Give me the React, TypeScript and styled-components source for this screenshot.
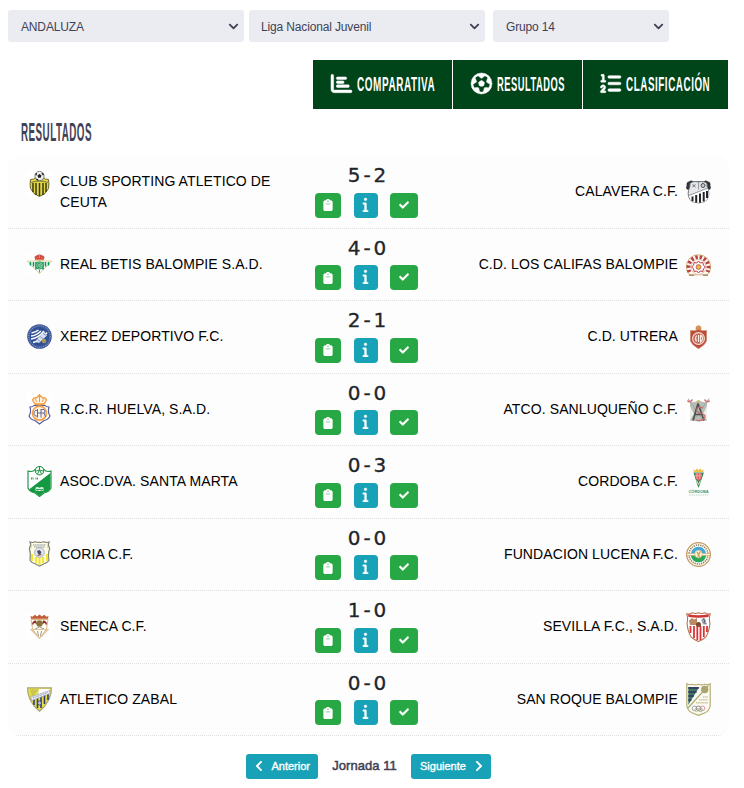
import React from "react";
import styled, { createGlobalStyle } from "styled-components";
import {
  FaChartBar,
  FaClipboard,
  FaInfo,
  FaListOl,
  FaRegFutbol,
} from "react-icons/fa6";
import {
  FaCheck,
  FaChevronDown,
  FaChevronLeft,
  FaChevronRight,
} from "react-icons/fa";

const COLORS = {
  ink: "#3f4254",
  field: "#ebecf2",
  nav: "#00441a",
  green: "#28a745",
  teal: "#17a2b8",
  line: "#e0e0e0",
};

const CeutaCrest = () => (
  <svg width="25" height="26" viewBox="0 0 25 26">
    <rect width="25" height="26" fill="#fff" />
    <path d="M3.500 8.500q4 0 5-2h8q1 2 5 2q.8 4 0 9q-2.500 6-9 8q-6.500-2-9-8q-.8-5 0-9z" fill="#e3d84a" stroke="#6b672c" strokeWidth="1" />
    <path d="M6 12v9M9 12v12M12.500 12v13M16 12v12M19 12v9" stroke="#3a3815" strokeWidth="1.500" />
    <path d="M4 11.500q8.500-3 17 0" fill="none" stroke="#8b8539" strokeWidth="1.300" />
    <circle cx="12.500" cy="5" r="4.600" fill="#f2f2f2" stroke="#555" strokeWidth=".7" />
    <path d="M12.500 3l2 1.500-.8 2.300h-2.500l-.8-2.300zM8 4l1.200-2 1 .6-.8 2zM15 1.500l2 2-1 1-1.500-1.800zM9.500 7.500l2 1-.6 1-2-1z" fill="#222" />
  </svg>
);

const BetisCrest = () => (
  <svg width="25" height="20" viewBox="0 0 25 20">
    <rect width="25" height="20" fill="#fff" />
    <path d="M.3 7h24.400l-5 5.500-7.200 7-7.200-7z" fill="#fff" stroke="#c9b777" strokeWidth=".7" />
    <path d="M3.500 8v3.500M6.500 8v4.500M9 8v7.500M16 8v7.500M18.500 8v4.500M21.500 8v3.500" stroke="#0b9b55" strokeWidth="1.600" />
    <circle cx="12.500" cy="11.500" r="3.700" fill="#8bcaa0" stroke="#0b9b55" strokeWidth=".8" />
    <path d="M11 9.500h2q2 1 0 2q2 1 0 2h-2zM12.500 16v2.500" fill="none" stroke="#3d8d64" strokeWidth=".9" />
    <path d="M8.500 5.800l-.7-3q2-1.800 4.700-2.100q2.700.3 4.700 2.100l-.7 3z" fill="#d74545" stroke="#a94436" strokeWidth=".5" />
    <path d="M8.500 5.800h8M12.500 0v4M9.500 3l1 1M15.500 3l-1 1" stroke="#e1aa45" strokeWidth=".8" />
  </svg>
);

const XerezCrest = () => (
  <svg width="25" height="25" viewBox="0 0 25 25">
    <circle cx="12.500" cy="12.500" r="12.300" fill="#3b5797" />
    <circle cx="12.500" cy="12.500" r="10.700" fill="none" stroke="#8799c3" strokeWidth="1.200" strokeDasharray="1 1" />
    <circle cx="12.500" cy="12.500" r="9.300" fill="#305096" />
    <path d="M4.500 9q4-.7 7-3M4 12q5-.3 10-5M4 15q7-.6 13-8M6 18.500q8-1.500 14-10" fill="none" stroke="#fff" strokeWidth="1.500" />
    <path d="M8 17.500L17 7.500l3 4-8 7.500z" fill="#dae1f0" />
    <path d="M10.500 15.500l3 2M13 12.500l3.500 2.500M16 9.500l3 2" stroke="#7185b6" strokeWidth=".8" />
    <circle cx="17" cy="17" r="2.300" fill="#aa9551" />
  </svg>
);

const HuelvaCrest = () => (
  <svg width="25" height="31" viewBox="0 0 25 31">
    <rect width="25" height="31" fill="#fff" />
    <path d="M8 10L5.500 6q1-3 4-2 1-2 3-2t3 2q3-1 4 2L17 10z" fill="#fff3e2" stroke="#f2a24e" strokeWidth="1.400" />
    <path d="M12.500 0v8M11 1.300h3M8 5l2 3M17 5l-2 3M7.500 10.200h10" stroke="#ef9840" strokeWidth="1" />
    <path d="M3 13q3 0 4-1.500h11q1 1.500 4 1.500-1.500 5 1 9-2 4-6 4.500l-4.500 3.500-4.500-3.500q-4-.5-6-4.500 2.500-4 1-9z" fill="#fff" stroke="#555c9f" strokeWidth="1.200" />
    <circle cx="12.500" cy="19.200" r="7" fill="#fff1dd" stroke="#f0a24b" strokeWidth="1.700" />
    <path d="M11 16.500q-4-1-4 2.700t4 2.700M10.500 15v8.500M14 15v8.500M10.500 19h7M14 15.500h3q2 1.700 0 3.500l1.500 4" fill="none" stroke="#6169a8" strokeWidth="1" />
  </svg>
);

const SantaMartaCrest = () => (
  <svg width="25" height="31" viewBox="0 0 25 31">
    <rect width="25" height="31" fill="#fff" />
    <path d="M1 5q5 1.500 7-1.500h9q2 3 7 1.500v17q-2 4-7 5l-4.500 3.500L8 27q-5-1-7-5z" fill="#fff" stroke="#24954a" strokeWidth="1.200" />
    <path d="M23.400 7v15q-2 4-6.500 4.500l-4.400 3.400-4.500-3.400q-4-.5-6-3z" fill="#149943" />
    <circle cx="12.500" cy="4.700" r="4.200" fill="#fff" stroke="#24954a" strokeWidth="1.100" />
    <path d="M12.500 1v3M9 5l3.500-1L16 5M10.500 8l2-4 2 4" fill="none" stroke="#24954a" strokeWidth="1" />
    <path d="M4 12.500h3M8.500 12.500h3" stroke="#359c58" strokeWidth="2" strokeDasharray="1 .5" />
    <path d="M8.500 21.500q2-1 4 .3 2-1.300 4-.3v3.500q-2-1-4 .2-2-1.200-4-.2z" fill="#d9f0df" />
    <path d="M9 23.500h7" stroke="#149943" strokeWidth=".8" />
  </svg>
);

const CoriaCrest = () => (
  <svg width="25" height="26" viewBox="0 0 25 26">
    <path d="M3 1q3 1 5-.3 4 1 4.500.5.5.5 4.500-.5 2 1.300 5 .3-1.500 3 .7 6.500-2 5-.7 12-2 3-5 3.200l-4.500 2.500L8 22.700Q5 22.500 3 19.500q1-7-.7-12Q4.500 4 3 1z" fill="#fffce6" stroke="#7c7f6c" strokeWidth="1.100" />
    <path d="M5 13v7M9 16v6M12.500 17v7M16 16v6M20 13v7" stroke="#f1e537" strokeWidth="2.200" />
    <path d="M4.500 2.500v5M20.500 2.500v5" stroke="#e9e08a" strokeWidth="1.200" />
    <path d="M6 4h13M7 6h11" stroke="#7e899b" strokeWidth="1.200" strokeDasharray="1.500 .6" />
    <circle cx="12.500" cy="11.500" r="4.800" fill="#e6e8ed" stroke="#a4abba" strokeWidth="1" />
    <path d="M10 10l2.500-1 2 2-1.500 3-2-1z" fill="#454e6b" />
    <path d="M10.500 14.500l4-1" stroke="#8c4f40" strokeWidth="1.200" />
  </svg>
);

const SenecaCrest = () => (
  <svg width="25" height="25" viewBox="0 0 25 25">
    <rect width="25" height="25" fill="#fff" />
    <path d="M4 4.800L3.500 2l2 .8L8 .8l2 1.700L12.500.4 15 2.500 17 .8l2.500 2 2-.8-.5 2.800z" fill="#c35a36" />
    <path d="M4 5.500h17l-1.500 9.500-7 9.500-7-9.500z" fill="#fffdf6" stroke="#d9b780" strokeWidth="1" />
    <path d="M5 10q.8-4 4-3.500L10 10l-3-1-1 2zM20 10q-.8-4-4-3.500L15 10l3-1 1 2z" fill="#922e2c" />
    <circle cx="12.500" cy="9.500" r="3.200" fill="#87723a" />
    <path d="M8 15l4.500-2L17 15M10.500 17l1 5M14.500 17l-1 5" fill="none" stroke="#929189" strokeWidth=".9" />
    <path d="M4 15.500h17l-8.500 8.800z" fill="none" stroke="#dfc29b" strokeWidth="1.200" />
  </svg>
);

const ZabalCrest = () => (
  <svg width="25" height="25" viewBox="0 0 25 25">
    <path d="M.6.8h23.800q0 8-3.500 13.500-3 6-8.400 10Q7 20.300 4.100 14.300.6 8.800.6.800z" fill="#e6df42" stroke="#aaa67c" strokeWidth="1.200" />
    <path d="M7 9v9M10.500 8v13M14 8v13M17.500 7v10M21 6v7" stroke="#303b75" strokeWidth="1.600" />
    <path d="M3 2.500h9L5 10z" fill="#c9c554" />
    <path d="M12 2h10.500v3L11 8z" fill="#fff" />
    <path d="M3.500 10L23 3.500v3L5 13.500z" fill="#edf0f8" stroke="#8c95b8" strokeWidth=".6" />
    <path d="M6 11L21 5.500" stroke="#7e88b3" strokeWidth="1" strokeDasharray="1 .8" />
    <circle cx="12.500" cy="16" r="2" fill="#b9c1e2" stroke="#303b75" strokeWidth=".8" />
  </svg>
);

const CalaveraCrest = () => (
  <svg width="25" height="24" viewBox="0 0 25 24">
    <path d="M2.500 10Q-1.200 9 .8 5.500-.2 2 3.500 1.200 5-.2 7 1.200h11Q20-.2 21.500 1.200q3.700.8 2.700 4.300 2 3.500-1.700 4.500z" fill="#30343a" />
    <path d="M4 3.500Q7 .7 12.500 2 18 .7 21 3.500q-.5 3 1.500 7 1.500 7-3.500 11-6.500 3-13 0-5-4-3.500-11 2-4 1.500-7z" fill="#e6e7e8" stroke="#727579" strokeWidth="1" />
    <path d="M3 16L22 8.500l.5 5q.5 5-4 8-6 2.500-12 0-3-2-3.500-5.500z" fill="#fff" />
    <path d="M6.500 16.500v4.700M10.200 15v7.700M14 13.500v9.200M17.700 12v9.500M21 11v7" stroke="#222529" strokeWidth="2" />
    <path d="M2.500 15.500L22 8M12.500 2.500v7" stroke="#8c8f92" strokeWidth=".9" />
    <path d="M6.500 4.500l3 2.500M9.500 4.500l-3 2.500" stroke="#60656a" strokeWidth=".9" />
    <circle cx="17" cy="5.500" r="2" fill="#c8cacc" stroke="#4a4f55" strokeWidth="1" />
  </svg>
);

const CalifasCrest = () => (
  <svg width="25" height="24" viewBox="0 0 25 24">
    <path d="M3.500 22.800A12.200 12 0 1 1 21.500 22.800z" fill="#fffaf0" stroke="#cdae72" strokeWidth=".9" />
    <path d="M3.500 20A10 10.300 0 1 1 21.500 20" fill="none" stroke="#b74244" strokeWidth="4" strokeDasharray="2.400 1.900" />
    <circle cx="12.500" cy="15" r="7.500" fill="#fffaf4" stroke="#d9aaa1" strokeWidth=".7" />
    <path d="M12.500 9l1.700 2 2.700-.5.500 2.700 2 1.800-2 1.800-.5 2.700-2.700-.5-1.700 2-1.700-2-2.700.5-.5-2.700-2-1.800 2-1.800.5-2.700 2.700.5z" fill="#fff" stroke="#b93e45" strokeWidth="1" />
    <circle cx="12.500" cy="15" r="2.400" fill="#e2bd3e" stroke="#b93e45" strokeWidth=".7" />
    <path d="M3 23.200h5M17 23.200h5" stroke="#8b6a44" strokeWidth="1" />
  </svg>
);

const UtreraCrest = () => (
  <svg width="25" height="24" viewBox="0 0 25 24">
    <path d="M10 6L9.500 3Q10 .4 12.500.3 15 .4 15.500 3L15 6z" fill="#d59258" />
    <path d="M4.500 5.500q5 1 8-1 3 2 8 1V16q-1.500 4-8 7.700-6.500-3.700-8-7.700z" fill="#bc483e" stroke="#cc8a5b" strokeWidth=".7" />
    <circle cx="12.500" cy="13.500" r="5.900" fill="#c7675c" stroke="#f5dfd1" strokeWidth="1.200" />
    <path d="M10.500 10.500q-2 3 0 6M12.500 10v7M14.500 10v7q2-1 2-3.500T14.500 10" fill="none" stroke="#fff0e8" strokeWidth="1.100" />
  </svg>
);

const SanluquenoCrest = () => (
  <svg width="25" height="25" viewBox="0 0 25 25">
    <rect width="25" height="25" fill="#fff" />
    <path d="M4 5q4 1 8.500-2Q17 6 21 5v18.500q-4 .5-8.500 1-4.500-.5-8.500-1z" fill="#b7beb5" />
    <path d="M4 9l4 8-4 6zM21 9l-4 8 4 6z" fill="#eceeea" />
    <path d="M2 1.500L17.500 24M23 1.500L7.500 24" stroke="#a7a49d" strokeWidth="1" />
    <path d="M1.500 3.500q2 3 5-1M23.500 3.500q-2 3-5-1" fill="none" stroke="#cf7278" strokeWidth="1.500" />
    <path d="M12 6.500L7 23.500M12 6.500l6 17M9 17.500h8" fill="none" stroke="#4b504e" strokeWidth="1.600" />
    <path d="M17 11q-5-2-6 1t4.500 4.500 2.500 5-8 1.500" fill="none" stroke="#cd6970" strokeWidth="1.200" />
    <circle cx="12.500" cy="4.500" r="1.200" fill="#d9bc53" />
  </svg>
);

const CordobaCrest = () => (
  <svg width="25" height="28" viewBox="0 0 25 28">
    <path d="M8 4L7 1.500l2.500 1L11 .3l1.500 1.900L14.500.3l1 2.200 2.700-1L17 4z" fill="#edc248" />
    <path d="M7.500 4.500h10.400L13.700 17l-1.100 3-1.200-3z" fill="#37865a" />
    <path d="M9 5h7l-1 6-2.500 2L10 11z" fill="#dc6767" />
    <path d="M11 5v6M13.800 5v6M9 7.800h7" stroke="#f8bbb0" strokeWidth=".7" />
    <path d="M10.500 12.500l2.100 4 2-4" fill="none" stroke="#f3f1d0" strokeWidth=".9" />
    <text x="2.600" y="24.700" fill="#3f9673" fontFamily="Liberation Sans" fontSize="4" fontWeight="700" textLength="20">CÓRDOBA</text>
    <path d="M3 27h19.500" stroke="#a9cdbd" strokeWidth=".8" strokeDasharray="1.500 .8" />
  </svg>
);

const LucenaCrest = () => (
  <svg width="25" height="25" viewBox="0 0 25 25">
    <circle cx="12.500" cy="12.500" r="11.800" fill="#fff9ec" stroke="#c39b62" strokeWidth="1.300" />
    <circle cx="12.500" cy="12.500" r="9.500" fill="none" stroke="#87765c" strokeWidth="1.500" strokeDasharray="1.200 1" />
    <circle cx="12.500" cy="12.500" r="7.700" fill="#40a9db" />
    <path d="M4.800 12.500h15.400a7.700 7.700 0 0 1-15.400 0z" fill="#29a85a" />
    <path d="M0 12.500h25" stroke="#bd9861" strokeWidth="2.700" />
    <path d="M1 12.500h23" stroke="#fff6e7" strokeWidth="1.500" />
    <circle cx="12.500" cy="12" r="3.700" fill="#fff3dc" stroke="#e2bd7c" strokeWidth=".7" />
    <path d="M10.700 10q2 1 1.400 4.500M14.500 9.500q-3 3-.5 7" fill="none" stroke="#d1a04b" strokeWidth="1.100" />
  </svg>
);

const SevillaCrest = () => (
  <svg width="25" height="30" viewBox="0 0 25 30">
    <rect width="25" height="30" fill="#fff" />
    <path d="M.8 1.800Q4 2.500 6 .8q3.500 1.500 6.500 0 3 1.500 6.500 0 2 1.700 5.200 1-1.500 5-.2 9.500-1 9-4 13.500-3 3-7.500 4.700Q8 27.800 5 24.800 2 20.300 1 11.300 2.300 6.800.8 1.800z" fill="#fff" stroke="#b4724d" strokeWidth="1.100" />
    <path d="M2 2.300q10 2 21 0l-.5 2.700q-10 1.500-20 0z" fill="#cf3432" />
    <path d="M3.500 14h18l-1.700 8.500-7.300 6.300-7.300-6.300z" fill="#fff" />
    <path d="M4.500 14v7M8 14v12M11.300 14v14.300M14.500 14v14M17.800 14v11M21 14v6" stroke="#d93537" strokeWidth="1.800" />
    <path d="M3 8.500l3-2.500 2 1.500L11 6v7H4z" fill="#b98a64" />
    <path d="M15 8q3-4 4.500-.5L21 12.500h-4z" fill="#a6adb8" />
    <path d="M17 7l2 1.500-1 2 1.500 1.500" fill="none" stroke="#444955" strokeWidth=".8" />
    <circle cx="12.500" cy="12.500" r="2.500" fill="#784c31" />
  </svg>
);

const SanRoqueCrest = () => (
  <svg width="25" height="33" viewBox="0 0 25 33">
    <path d="M.8.700q3 1.500 5.500.500 3 1.500 6.200 0 3.200 1.500 6.200 0 2.500 1 5.500-.500V23q-1 5-5.700 7L12.500 32.400 6.500 30Q1.800 28 .8 23z" fill="#fbfaf3" stroke="#b5ae71" strokeWidth="1.200" />
    <path d="M2.300 4h11L2.300 22z" fill="#41765f" />
    <path d="M2.300 5h10.500M2.300 9h8.300M2.300 13h5.600M2.300 17h3" stroke="#333360" strokeWidth="1.700" />
    <path d="M22.500 2.500L2 25" stroke="#b1aa6f" strokeWidth="1.200" />
    <circle cx="18.700" cy="6.500" r="3.700" fill="#aaa56c" />
    <path d="M17 14h5M13 16.800h9M10 19.700h12.500" stroke="#cbc69d" strokeWidth="1.400" strokeDasharray="1.500 .6" />
    <g fill="none" strokeWidth=".8">
      <circle cx="8.500" cy="25.300" r="2.300" stroke="#7790bb" />
      <circle cx="12.500" cy="25.300" r="2.300" stroke="#77777b" />
      <circle cx="16.500" cy="25.300" r="2.300" stroke="#cf8084" />
      <circle cx="10.500" cy="26.800" r="1.800" stroke="#c9b870" />
      <circle cx="14.500" cy="26.800" r="1.800" stroke="#83a78a" />
    </g>
  </svg>
);

interface Team {
  name: string;
  Crest: React.FC;
}

interface Match {
  home: Team;
  away: Team;
  goals: [number, number];
}

const MATCHES: Match[] = [
  {
    home: { name: "CLUB SPORTING ATLETICO DE CEUTA", Crest: CeutaCrest },
    away: { name: "CALAVERA C.F.", Crest: CalaveraCrest },
    goals: [5, 2],
  },
  {
    home: { name: "REAL BETIS BALOMPIE S.A.D.", Crest: BetisCrest },
    away: { name: "C.D. LOS CALIFAS BALOMPIE", Crest: CalifasCrest },
    goals: [4, 0],
  },
  {
    home: { name: "XEREZ DEPORTIVO F.C.", Crest: XerezCrest },
    away: { name: "C.D. UTRERA", Crest: UtreraCrest },
    goals: [2, 1],
  },
  {
    home: { name: "R.C.R. HUELVA, S.A.D.", Crest: HuelvaCrest },
    away: { name: "ATCO. SANLUQUEÑO C.F.", Crest: SanluquenoCrest },
    goals: [0, 0],
  },
  {
    home: { name: "ASOC.DVA. SANTA MARTA", Crest: SantaMartaCrest },
    away: { name: "CORDOBA C.F.", Crest: CordobaCrest },
    goals: [0, 3],
  },
  {
    home: { name: "CORIA C.F.", Crest: CoriaCrest },
    away: { name: "FUNDACION LUCENA F.C.", Crest: LucenaCrest },
    goals: [0, 0],
  },
  {
    home: { name: "SENECA C.F.", Crest: SenecaCrest },
    away: { name: "SEVILLA F.C., S.A.D.", Crest: SevillaCrest },
    goals: [1, 0],
  },
  {
    home: { name: "ATLETICO ZABAL", Crest: ZabalCrest },
    away: { name: "SAN ROQUE BALOMPIE", Crest: SanRoqueCrest },
    goals: [0, 0],
  },
];

const App: React.FC = () => {
  return (
    <Page>
      <GlobalStyle />
      <Filters>
        <Select width={236} inset={13}>
          ANDALUZA
          <FaChevronDown />
        </Select>
        <Select width={236} inset={12}>
          Liga Nacional Juvenil
          <FaChevronDown />
        </Select>
        <Select width={176} inset={13} gap={3}>
          Grupo 14
          <FaChevronDown />
        </Select>
      </Filters>

      <Nav>
        <NavTab width={139}>
          <FaChartBar />
          <Condensed width={78} size={21} ratio={0.475}>
            <span>COMPARATIVA</span>
          </Condensed>
        </NavTab>
        <NavTab width={129}>
          <FaRegFutbol />
          <Condensed width={67} size={21} ratio={0.443}>
            <span>RESULTADOS</span>
          </Condensed>
        </NavTab>
        <NavTab width={145}>
          <FaListOl />
          <Condensed width={85} size={21} ratio={0.468}>
            <span>CLASIFICACIÓN</span>
          </Condensed>
        </NavTab>
      </Nav>

      <Title>
        <Condensed width={71} size={25} ratio={0.393}>
          <span>RESULTADOS</span>
        </Condensed>
      </Title>

      <MatchList>
        {MATCHES.map(({ home, away, goals }) => (
          <MatchRow key={home.name}>
            <TeamCell tall={home.name.length > 28}>
              <CrestBox>
                <home.Crest />
              </CrestBox>
              <TeamName>{home.name}</TeamName>
            </TeamCell>
            <ScoreCell>
              <Score>
                {goals[0]} - {goals[1]}
              </Score>
              <Actions>
                <ActionButton width={26} color={COLORS.green} icon={12}>
                  <FaClipboard />
                </ActionButton>
                <ActionButton width={24} color={COLORS.teal} icon={15} lift={2}>
                  <FaInfo />
                </ActionButton>
                <ActionButton width={28} color={COLORS.green} icon={10} lift={1}>
                  <FaCheck />
                </ActionButton>
              </Actions>
            </ScoreCell>
            <TeamCell away>
              <TeamName>{away.name}</TeamName>
              <CrestBox>
                <away.Crest />
              </CrestBox>
            </TeamCell>
          </MatchRow>
        ))}
      </MatchList>

      <Pager>
        <PagerButton width={72}>
          <FaChevronLeft />
          Anterior
        </PagerButton>
        <Matchday>Jornada 11</Matchday>
        <PagerButton width={80}>
          Siguiente
          <FaChevronRight />
        </PagerButton>
      </Pager>
    </Page>
  );
};

const GlobalStyle = createGlobalStyle`
  * {
    box-sizing: border-box;
  }

  body {
    margin: 0;
    background-color: #fff;
    font-family: "Liberation Sans", Arial, sans-serif;
  }

  svg {
    display: block;
    flex-shrink: 0;
  }
`;

const Page = styled.div`
  width: 744px;
  height: 788px;
  padding: 10px 16px 0 8px;
  overflow: hidden;
`;

const Filters = styled.div`
  display: flex;
  gap: 5px;
`;

const Select = styled.div<{ width: number; inset: number; gap?: number }>`
  width: ${(props) => props.width}px;
  height: 32px;
  margin-left: ${(props) => props.gap ?? 0}px;
  padding: 1px 5px 0 ${(props) => props.inset}px;
  display: flex;
  align-items: center;
  justify-content: space-between;
  color: ${COLORS.ink};
  background-color: ${COLORS.field};
  border-radius: 3px;
  font-size: 12px;
  letter-spacing: -0.15px;

  & > svg {
    width: 11px;
    height: 11px;
  }
`;

const Nav = styled.div`
  margin-top: 18px;
  display: flex;
  justify-content: flex-end;
  gap: 1px;
`;

const NavTab = styled.div<{ width: number }>`
  width: ${(props) => props.width}px;
  height: 49px;
  padding-bottom: 2px;
  display: flex;
  align-items: center;
  justify-content: center;
  gap: 5px;
  color: #fff;
  background-color: ${COLORS.nav};

  & > svg {
    width: 21px;
    height: 21px;
    stroke: currentColor;
    stroke-width: 12px;
    overflow: visible;
  }
`;

/* Squeezes the inner span horizontally to get a poster-like lettering */
const Condensed = styled.div<{ width: number; size: number; ratio: number }>`
  width: ${(props) => props.width}px;
  font-size: ${(props) => props.size}px;
  line-height: 1.2;
  font-weight: 700;
  letter-spacing: 1.2px;
  white-space: nowrap;

  & > span {
    display: inline-block;
    transform: scaleX(${(props) => props.ratio});
    transform-origin: left center;
  }
`;

const Title = styled.div`
  height: 47px;
  padding: 8px 0 0 13px;
  color: ${COLORS.ink};
`;

const MatchList = styled.div`
  width: 721px;
  background-color: #fdfdfd;
  border-radius: 12px;
  overflow: hidden;
`;

const MatchRow = styled.div`
  height: 72.5px;
  padding: 0 18px 0 19px;
  display: grid;
  grid-template-columns: 276px 126px 1fr;
  border-bottom: 1px dotted ${COLORS.line};
`;

const TeamCell = styled.div<{ away?: boolean; tall?: boolean }>`
  padding: ${(props) => (props.tall ? "15px 0 0" : "0")};
  display: flex;
  align-items: ${(props) => (props.tall ? "flex-start" : "center")};
  justify-content: ${(props) => (props.away ? "flex-end" : "flex-start")};
  gap: 8px;
`;

const CrestBox = styled.div`
  width: 25px;
  flex-shrink: 0;
`;

const TeamName = styled.div`
  max-width: 222px;
  color: #000;
  font-size: 14px;
  line-height: 21px;
  letter-spacing: 0.1px;
`;

const ScoreCell = styled.div`
  display: flex;
  flex-direction: column;
  align-items: center;
`;

const Score = styled.div`
  height: 36.7px;
  padding: 1px 0 0 2px;
  color: #212529;
  font-family: "DejaVu Sans", sans-serif;
  font-size: 20px;
  line-height: 37px;
  word-spacing: -3.4px;
  -webkit-text-stroke: 0.3px #212529;
`;

const Actions = styled.div`
  display: grid;
  grid-template-columns: 39px 36px 28px;
`;

const ActionButton = styled.div<{
  width: number;
  color: string;
  icon: number;
  lift?: number;
}>`
  width: ${(props) => props.width}px;
  height: 25px;
  padding-bottom: ${(props) => props.lift ?? 0}px;
  display: flex;
  align-items: center;
  justify-content: center;
  color: #fff;
  background-color: ${(props) => props.color};
  border-radius: 4px;

  & > svg {
    width: ${(props) => props.icon}px;
    height: ${(props) => props.icon}px;
    stroke: currentColor;
    stroke-width: 12px;
  }
`;

const Pager = styled.div`
  margin: 18px 0 0 238px;
  display: flex;
  align-items: center;
`;

const PagerButton = styled.div<{ width: number }>`
  width: ${(props) => props.width}px;
  height: 25px;
  padding: 0 8px 1px 9px;
  display: flex;
  align-items: center;
  justify-content: space-between;
  color: #fff;
  background-color: ${COLORS.teal};
  border-radius: 3px;
  font-size: 11px;
  -webkit-text-stroke: 0.35px #fff;

  & > svg {
    width: 8px;
    height: 12px;
  }
`;

const Matchday = styled.div`
  width: 93px;
  padding-bottom: 2px;
  text-align: center;
  color: ${COLORS.ink};
  font-size: 13px;
  letter-spacing: 0.05px;
  -webkit-text-stroke: 0.5px ${COLORS.ink};
`;

export default App;
